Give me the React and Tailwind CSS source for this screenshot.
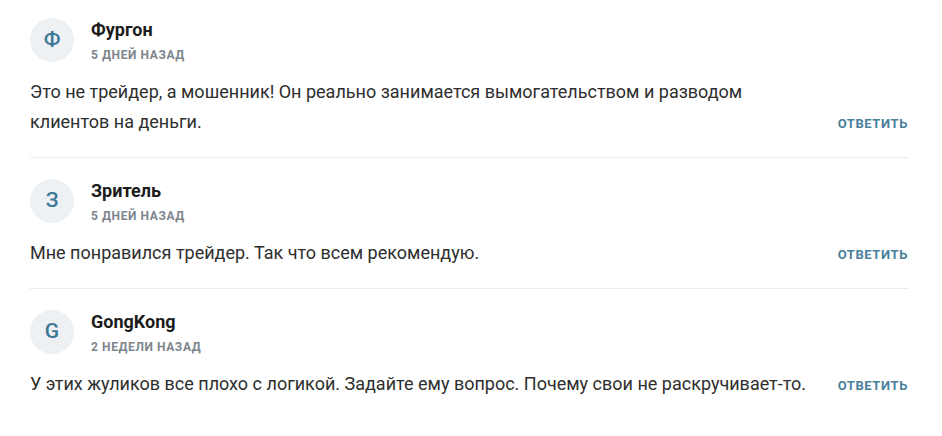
const comments = [
  {
    id: 1,
    initial: "Ф",
    name: "Фургон",
    date: "5 дней назад",
    text: "Это не трейдер, а мошенник! Он реально занимается вымогательством и разводом клиентов на деньги.",
  },
  {
    id: 2,
    initial: "З",
    name: "Зритель",
    date: "5 дней назад",
    text: "Мне понравился трейдер. Так что всем рекомендую.",
  },
  {
    id: 3,
    initial: "G",
    name: "GongKong",
    date: "2 недели назад",
    text: "У этих жуликов все плохо с логикой. Задайте ему вопрос. Почему свои не раскручивает-то.",
  },
];

function Comment({ comment, first, last }) {
  return (
    <div
      className={`${first ? "pt-[18px]" : "pt-[21px]"} pb-[20px] ${last ? "" : "border-b border-[#ececec]"}`}
    >
      <div className="flex items-center gap-[17px]">
        <div className="w-[44px] h-[44px] rounded-full bg-[#eef1f4] flex items-center justify-center text-[21px] font-medium text-[#3d7896]">
          {comment.initial}
        </div>
        <div className="flex flex-col">
          <span className="text-[18px] font-bold leading-[22px] text-[#1c1c1c]">{comment.name}</span>
          <span className="mt-[7px] text-[12px] font-bold uppercase tracking-[0.6px] leading-[14px] text-[#7d858c]">
            {comment.date}
          </span>
        </div>
      </div>
      <div className="mt-[15px] flex items-end justify-between">
        <p className="w-[790px] text-[18px] leading-[30px] text-[#2e2e2e]">{comment.text}</p>
        <button className="mb-[6px] text-[13px] font-bold uppercase tracking-[0.6px] leading-[15px] text-[#4a7f9c]">
          Ответить
        </button>
      </div>
    </div>
  );
}

export default function App() {
  return (
    <div className="min-h-screen bg-white px-[30px] font-['Roboto',sans-serif]">
      <div className="w-[878px]">
        {comments.map((c, i) => (
          <Comment key={c.id} comment={c} first={i === 0} last={i === comments.length - 1} />
        ))}
      </div>
    </div>
  );
}
